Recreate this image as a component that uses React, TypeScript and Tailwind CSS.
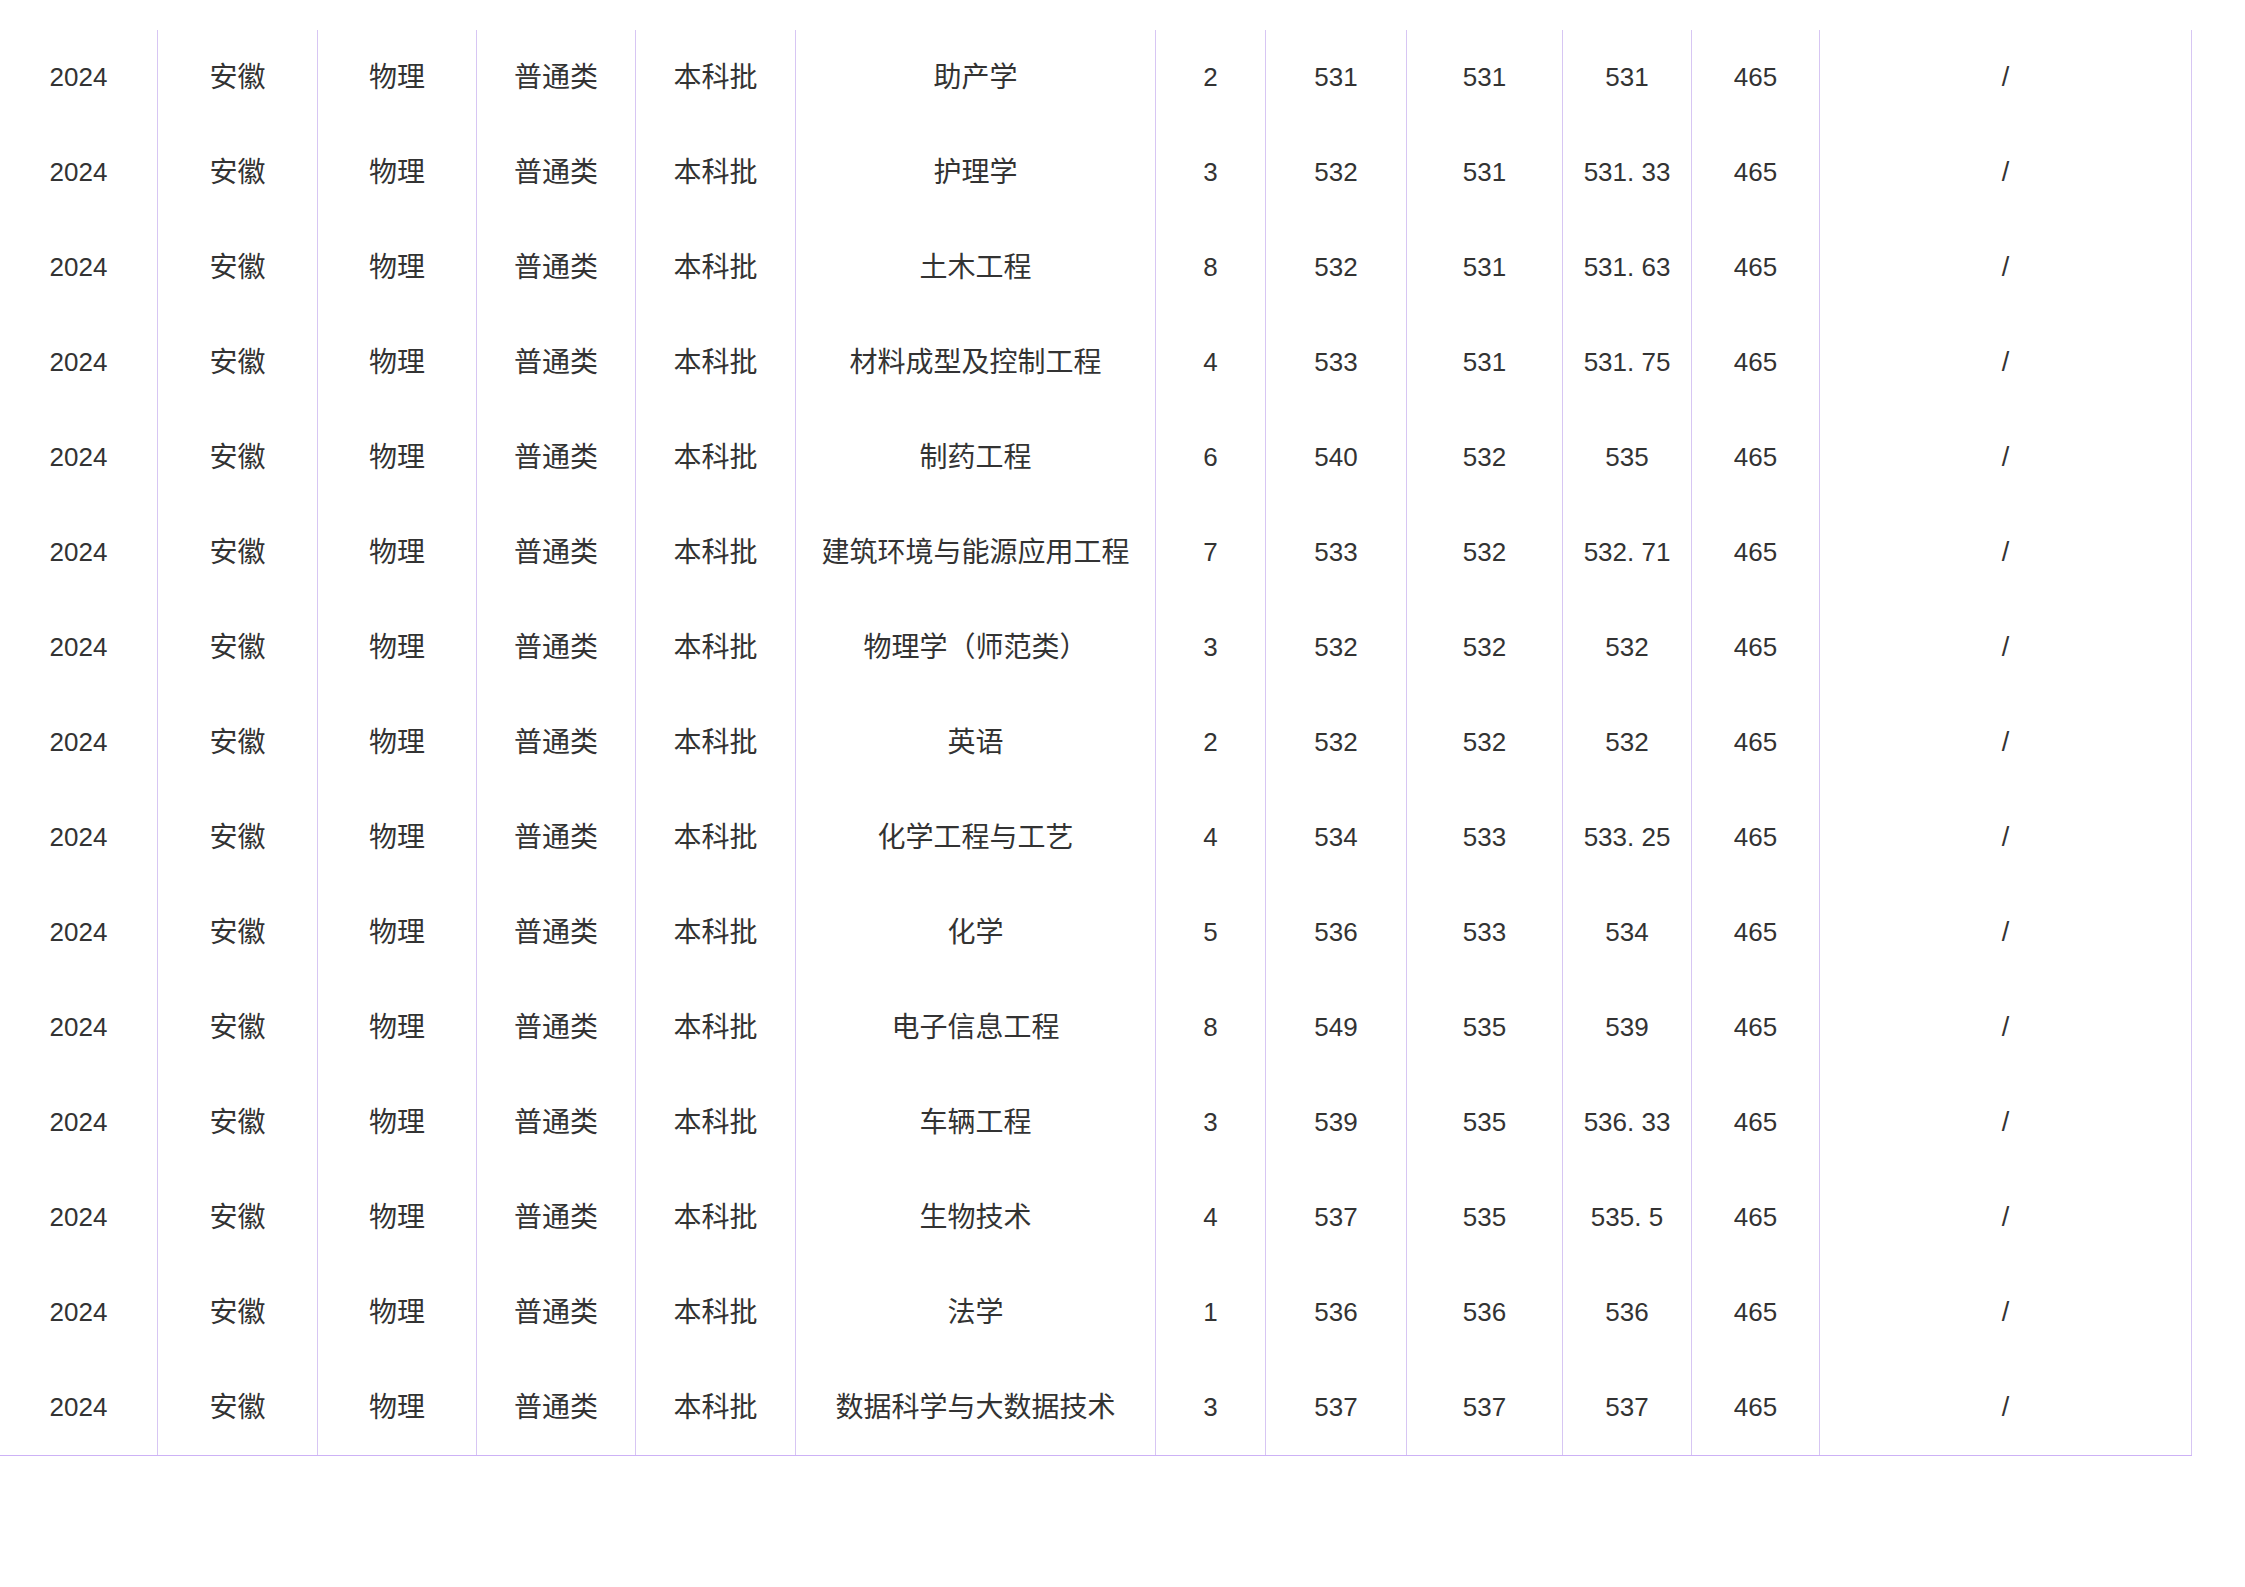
import React from "react";

const rows: [string, string, string, string, string][] = [
  ["助产学", "2", "531", "531", "531"],
  ["护理学", "3", "532", "531", "531. 33"],
  ["土木工程", "8", "532", "531", "531. 63"],
  ["材料成型及控制工程", "4", "533", "531", "531. 75"],
  ["制药工程", "6", "540", "532", "535"],
  ["建筑环境与能源应用工程", "7", "533", "532", "532. 71"],
  ["物理学（师范类）", "3", "532", "532", "532"],
  ["英语", "2", "532", "532", "532"],
  ["化学工程与工艺", "4", "534", "533", "533. 25"],
  ["化学", "5", "536", "533", "534"],
  ["电子信息工程", "8", "549", "535", "539"],
  ["车辆工程", "3", "539", "535", "536. 33"],
  ["生物技术", "4", "537", "535", "535. 5"],
  ["法学", "1", "536", "536", "536"],
  ["数据科学与大数据技术", "3", "537", "537", "537"],
];

export default function App() {
  return (
    <div
      className="min-h-[1587px] w-full bg-white pt-[30px] text-[#333333]"
      style={{ fontFamily: '"Liberation Sans", "Noto Sans CJK SC", sans-serif' }}
    >
      <div className="w-[2192px] border-b border-[#cdb2f6]">
        {rows.map((r, i) => {
          const cells = ["2024", "安徽", "物理", "普通类", "本科批", r[0], r[1], r[2], r[3], r[4], "465", "/"];
          return (
            <div
              key={i}
              className="grid h-[95px] grid-cols-[158px_160px_159px_159px_160px_360px_110px_141px_156px_129px_128px_372px]"
            >
              {cells.map((c, j) => (
                <div
                  key={j}
                  className={`flex items-center justify-center whitespace-nowrap border-r border-[#d7c6f3] ${
                    j >= 1 && j <= 5 ? "text-[28px]" : j === 11 ? "text-[27px] font-light" : "text-[26px]"
                  }`}
                >
                  {c}
                </div>
              ))}
            </div>
          );
        })}
      </div>
    </div>
  );
}
